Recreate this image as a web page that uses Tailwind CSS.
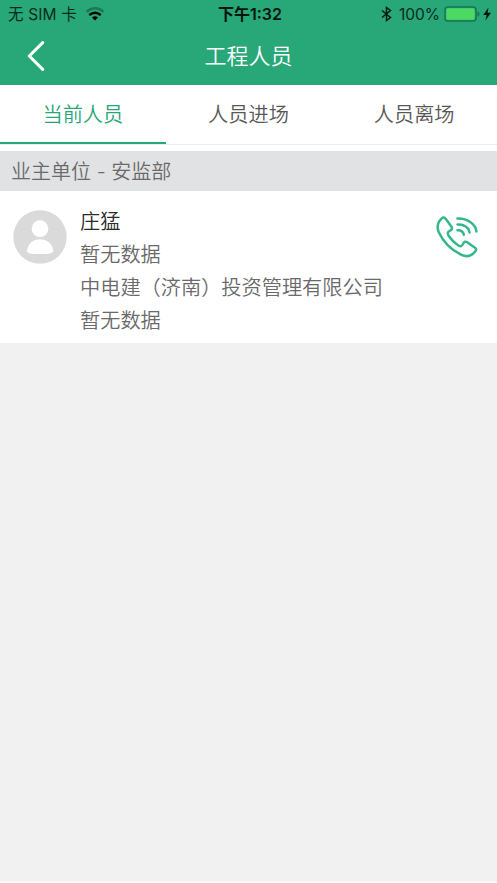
<!DOCTYPE html>
<html lang="zh-CN">
<head>
<meta charset="utf-8">
<title>工程人员</title>
<script src="https://cdn.jsdelivr.net/npm/@tailwindcss/browser@4"></script>
</head>
<body class="flex h-[883px] w-[497px] flex-col overflow-hidden bg-[#f1f1f1] font-['Noto_Sans_CJK_SC',sans-serif] font-[350] text-[#6a6a6a]">
  <header class="h-[85px] shrink-0 bg-[#28a778]">
    <div class="grid h-7 grid-cols-3 items-center pl-[8px] pr-[5px] font-['Inter','Noto_Sans_CJK_SC',sans-serif] text-[15.5px] leading-7 text-[#082b20]">
      <div class="flex items-center gap-2 whitespace-nowrap">
        <span class="translate-y-px font-normal [word-spacing:0.5px]">无 SIM 卡</span>
        <svg class="h-[14px] w-[20px]" viewBox="0 0 20 14" fill="none" stroke-width="2.5">
          <path d="M1.500 4.700Q10-2.200 18.500 4.700" stroke="#1c7958"/>
          <path d="M4.300 8Q10 3.400 15.700 8" stroke="#000"/>
          <path d="M7 10.600Q10 8 13 10.600L10 13.600Z" fill="#000"/>
        </svg>
      </div>
      <span class="text-center text-[16px] font-semibold text-[#04150f]">下午1:32</span>
      <div class="flex items-center justify-end whitespace-nowrap">
        <svg class="mr-[7px] h-[16px] w-[11px]" viewBox="0 0 11 15" fill="none" stroke="#041c14" stroke-width="1.5"><path d="M1 4l8.500 7L5.500 14V1l4 3L1 11"/></svg>
        <span class="translate-y-px font-normal">100%</span>
        <svg class="ml-1 h-4 w-[48px]" viewBox="0 0 48 16">
          <rect x="1" y="1" width="31" height="14" rx="3" fill="none" stroke="#1b7453" stroke-width="1.500"/>
          <rect x="2.300" y="2.300" width="28.400" height="11.400" rx="1.500" fill="#4cd964"/>
          <path d="M33.500 5.300q2 .8 2 2.700t-2 2.700z" fill="#1b7453"/>
          <path d="M44.500 1.500L39.300 9h3.300l-1.200 5.500L47 6.700h-3.400z" fill="#04150f"/>
        </svg>
      </div>
    </div>
    <div class="grid h-[57px] grid-cols-3 items-start">
      <svg class="ml-[27px] mt-[13px] h-[30px] w-[18px]" viewBox="0 0 18 30" fill="none" stroke="#fff" stroke-width="3" stroke-linecap="round" stroke-linejoin="round"><path d="M15.700 1.600L2.300 15l13.400 13.400"/></svg>
      <h1 class="text-center text-[22px] leading-[52px] text-white">工程人员</h1>
    </div>
  </header>
  <nav class="grid h-[60px] shrink-0 grid-cols-3 border-b border-[#ededed] bg-white text-center text-[20.200px] leading-[58px] text-[#585858]">
    <div class="h-[59px] border-b-2 border-[#28a778] text-[#28a778]">当前人员</div>
    <div>人员进场</div>
    <div>人员离场</div>
  </nav>
  <div class="h-1.5 shrink-0 bg-white"></div>
  <h2 class="h-10 shrink-0 bg-[#e1e2e4] pl-[11px] text-[20px] leading-10">业主单位<span class="font-['Inter']"> - </span>安监部</h2>
  <main class="flex h-[152px] shrink-0 items-start bg-white pl-[13px] pr-[19px]">
    <svg class="mt-[19px] h-[54px] w-[54px]" viewBox="0 0 54 54"><circle cx="27" cy="27" r="26.700" fill="#dadada"/><g fill="#fff"><circle cx="27" cy="18.700" r="8.400"/><path d="M14 40.500C15 33.700 20 29.200 27 29.200s12.300 4.500 13.300 11.300c.2 3.200-5.300 3.500-13.300 3.500s-13.300-.3-13-3.500z"/></g></svg>
    <div class="ml-[13px] flex-1 whitespace-nowrap pt-[13px] text-[20.200px] leading-[33px]">
      <div class="text-[#2a2a2a]">庄猛</div>
      <div>暂无数据</div>
      <div>中电建（济南）投资管理有限公司</div>
      <div>暂无数据</div>
    </div>
    <svg class="mt-[25px] h-[42px] w-[42px]" viewBox="0 0 42 42" fill="none" stroke="#35b78d" stroke-width="2.500" stroke-linecap="round" stroke-linejoin="round">
      <path d="M5.500 2.700C7 1.200 8.300 1.300 9.500 2.600L15.300 10.500C16.500 12 16 13.500 14.500 14.300C11.500 15.700 11 17 12.800 20C15.500 24 18.500 27 22 29.300C24.500 31 25.800 30.500 27.300 27.500C28 25.700 29.500 25.200 31.200 26.200L39 31.700C40.500 32.900 40.600 34 39.200 35.500C35.500 40.200 30.500 41.300 25 38.600C14.500 33.500 7 25.500 2.700 16C.5 10.500 1.500 6.500 5.500 2.700Z"/>
      <path d="M21.500 2.600C31 2.200 39.500 8 40.500 15.500M21.500 8.500C28 8 33 11.500 33.500 16.500M21.500 14.200C25 14 27.300 15.700 27.800 18.800"/>
    </svg>
  </main>
  <div class="flex-1"></div>
  <footer class="h-0.5 shrink-0 bg-[#fafafa]"></footer>
</body>
</html>
